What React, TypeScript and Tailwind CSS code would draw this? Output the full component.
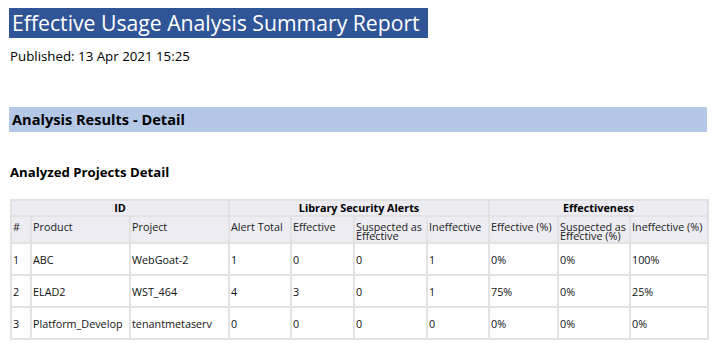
import React from "react";

const cols = [20, 99, 99, 62, 63, 73, 62, 69, 72, 78];

const rows = [
  ["1", "ABC", "WebGoat-2", "1", "0", "0", "1", "0%", "0%", "100%"],
  ["2", "ELAD2", "WST_464", "4", "3", "0", "1", "75%", "0%", "25%"],
  ["3", "Platform_Develop", "tenantmetaserv", "0", "0", "0", "0", "0%", "0%", "0%"],
];

const heads = [
  "#",
  "Product",
  "Project",
  "Alert Total",
  "Effective",
  "Suspected as Effective",
  "Ineffective",
  "Effective (%)",
  "Suspected as Effective (%)",
  "Ineffective (%)",
];

export default function App() {
  return (
    <div
      className="w-[718px] h-[356px] bg-white text-black overflow-hidden pl-[9px] pt-[8px]"
      style={{ fontFamily: "'Open Sans', sans-serif" }}
    >
      <div className="inline-block bg-[#2f5597] text-white text-[21.2px] leading-[30px] h-[30px] pl-[3px] pr-[8px]">
        Effective Usage Analysis Summary Report
      </div>
      <div className="text-[13.3px] leading-[18px] mt-[9px] ml-[1px]">Published: 13 Apr 2021 15:25</div>
      <div className="mt-[42px] w-[698px] h-[25px] bg-[#b4c7e7] font-bold text-[14.6px] leading-[25px] pl-[3px]">
        Analysis Results - Detail
      </div>
      <div className="mt-[31px] font-bold text-[13.2px] leading-[18px] ml-[1px]">Analyzed Projects Detail</div>
      <table className="mt-[18px] ml-[1px] table-fixed border-collapse text-[10.8px] leading-[11px] border-2 border-[#e2e2e2]">
        <colgroup>
          {cols.map((w, i) => (
            <col key={i} style={{ width: w }} />
          ))}
        </colgroup>
        <thead>
          <tr className="bg-[#ececf2] h-[16px]">
            <th colSpan={3} className="border-2 border-[#e2e2e2] font-bold text-center p-0 leading-[14px]">ID</th>
            <th colSpan={4} className="border-2 border-[#e2e2e2] font-bold text-center p-0 leading-[14px]">Library Security Alerts</th>
            <th colSpan={3} className="border-2 border-[#e2e2e2] font-bold text-center p-0 leading-[14px]">Effectiveness</th>
          </tr>
          <tr className="bg-[#ececf2] h-[27px]">
            {heads.map((h, i) => (
              <th
                key={i}
                className="border-2 border-[#e2e2e2] font-normal text-left align-top pt-[5px] pl-[1px] pr-0 leading-[9px] text-[#222]"
              >
                {h}
              </th>
            ))}
          </tr>
        </thead>
        <tbody>
          {rows.map((r, ri) => (
            <tr key={ri} className="h-[32px]">
              {r.map((c, ci) => (
                <td key={ci} className="border-2 border-[#e2e2e2] pl-[1px] pr-0 align-middle whitespace-nowrap text-[#111]">
                  {c}
                </td>
              ))}
            </tr>
          ))}
        </tbody>
      </table>
    </div>
  );
}
